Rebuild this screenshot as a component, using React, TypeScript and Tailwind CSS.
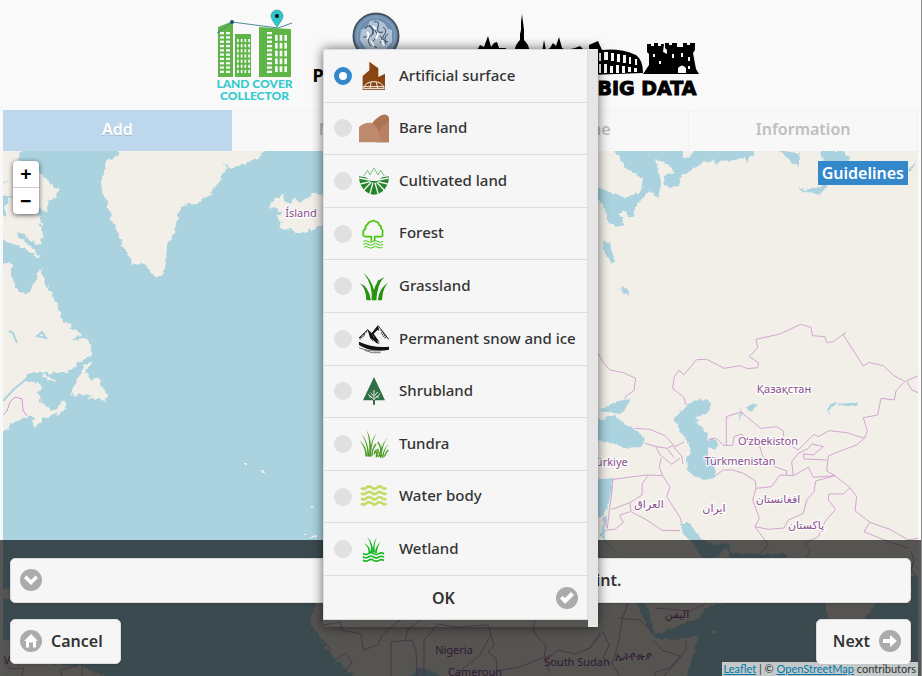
import React, { useState } from "react";

const ink = "font-['Noto_Sans','Open_Sans',sans-serif]";

/* ---------- Land cover icons ---------- */

function Svg({ children }: { children: React.ReactNode }) {
  return (
    <svg viewBox="0 0 90 90" className="size-[30px] shrink-0" aria-hidden="true" fill="none">
      {children}
    </svg>
  );
}

const ArtificialIcon = () => (
  <Svg>
    <path fill="#8b4513" d="M31 2 L58 22 V48 L78 38 V87 H11 V45 L31 28 Z" />
    <path d="M13 82 Q20 62 44 62 Q70 62 76 82" stroke="#f6f6f6" strokeWidth="3" />
    <path d="M13 77 H76 M36 64 L33 82 M52 64 L56 82 M13 83 H76" stroke="#f6f6f6" strokeWidth="3" />
  </Svg>
);

const BareIcon = () => (
  <Svg>
    <path fill="#ad7453" d="M38 32 Q62 3 80 5 Q90 7 90 18 V88 H50 Z" />
    <path fill="#b98062" d="M62 54 Q72 34 90 28 V88 H60 Z" />
    <path fill="#bd8a6e" d="M0 42 Q16 28 34 29 Q48 32 58 52 Q65 70 67 88 H0 Z" />
  </Svg>
);

const CultivatedIcon = () => (
  <Svg>
    <path d="M14 30 L26 13 L33 27 L45 6 L57 27 L65 13 L76 30" stroke="#4aa04a" strokeWidth="2" />
    <path fill="#25842b" d="M0 31 L20 34 L31 41 Q45 31 59 41 L70 34 L90 31 Q90 61 68 78 Q45 95 22 78 Q0 61 0 31 Z" />
    <path
      d="M32 42 L1 36 M33 47 L4 54 M37 49 L14 73 M42 50 L32 86 M48 50 L58 86 M53 49 L76 73 M57 47 L86 54 M58 42 L89 36"
      stroke="#f6f6f6"
      strokeWidth="4"
    />
    <path fill="#f6f6f6" d="M22 28 L33 34 Q40 28 45 31 Q50 28 57 34 L68 28 L56 45 H34 Z" />
  </Svg>
);

const ForestIcon = () => (
  <Svg>
    <g stroke="#43c80a" strokeWidth="5" strokeLinejoin="round">
      <path d="M37 67 V53 H20 Q9 51 13 42 Q11 34 20 29 Q17 20 25 17 Q28 8 38 7 Q42 2 48 7 Q59 8 60 17 Q68 20 66 29 Q74 34 70 44 Q74 53 63 53 H47 V67" />
      <path d="M13 67 Q20 62 27 68 Q35 73 42 67 Q50 62 57 68 Q65 73 72 67 M13 76 Q20 70 27 76 Q35 82 42 76 Q50 70 57 76 Q65 82 72 76 M15 85 Q22 79 28 85 Q36 90 42 85 Q50 79 57 85 Q64 89 70 85" strokeWidth="3" />
    </g>
  </Svg>
);

const GrassIcon = () => (
  <Svg>
    <path
      fill="#279410"
      d="M13 5 Q38 27 45 57 Q52 28 76 18 Q55 38 52 88 H38 Q42 40 13 5 Z M3 37 Q29 47 36 88 H22 Q22 55 3 37 Z M88 35 Q71 48 69 88 H56 Q61 48 88 35 Z M51 60 Q50 35 60 25 L62 29 Q56 42 56 57 Z"
    />
  </Svg>
);

const SnowIcon = () => (
  <Svg>
    <path d="M0 42 L26 17 L39 29 L57 5 L90 47" stroke="#222" strokeWidth="3" />
    <path fill="#111" d="M26 17 L39 30 L44 40 L62 60 L52 57 L39 44 L44 55 L33 41 Z M57 5 L61 22 L56 17 L44 29 L62 55 L50 48 L38 28 Z M0 53 Q40 72 90 68 V77 Q35 86 0 63 Z" />
    <path d="M3 41 L26 20 M2 46 L18 31 M66 18 L84 41 M66 26 L80 43" stroke="#222" strokeWidth="4" strokeDasharray="3 3" />
    <path d="M0 71 Q30 84 68 80 M17 79 Q40 90 65 86" stroke="#333" strokeWidth="2" />
  </Svg>
);

const ShrubIcon = () => (
  <Svg>
    <path fill="#2f6f43" d="M45 3 L78 73 H48 V86 H42 V73 H12 Z" />
    <path d="M45 42 V72 M44 69 L27 55 M46 69 L63 53 M44 60 L35 50 M46 60 L56 48 M39 63 H31 M51 63 H60" stroke="#dfe9e1" strokeWidth="3" />
  </Svg>
);

const TundraIcon = () => (
  <Svg>
    <g fill="#4c9b22">
      <path d="M2 35 Q22 48 25 84 L19 82 Q20 56 2 35 Z M7 14 Q29 37 31 84 L25 80 Q26 42 7 14 Z M23 4 Q39 28 36 83 H30 Q34 32 23 4 Z M54 12 Q40 28 36 74 L33 70 Q36 28 54 12 Z M70 32 Q71 58 62 85 L58 79 Q69 58 70 32 Z M90 45 Q76 59 73 86 H68 Q73 57 90 45 Z M86 27 Q72 43 69 71 L66 69 Q70 40 86 27 Z" />
    </g>
    <path d="M39 82 Q38 61 51 45 M45 76 Q48 64 58 60 M52 85 Q51 72 60 64 M56 39 Q67 51 67 82 M59 69 L66 86 M76 83 Q80 70 88 63 M48 63 L58 84" stroke="#4c9b22" strokeWidth="4" />
  </Svg>
);

const WaterIcon = () => (
  <Svg>
    <path
      d="M6 17 Q14 24 22 17 Q31 10 39 17 Q47 24 54 17 Q62 10 70 17 Q76 23 82 17 M6 33 Q14 40 22 33 Q31 26 39 33 Q47 40 54 33 Q62 26 70 33 Q76 39 82 33 M6 49 Q14 56 22 49 Q31 42 39 49 Q47 56 54 49 Q62 42 70 49 Q76 55 82 49 M6 64 Q14 71 22 64 Q31 57 39 64 Q47 71 54 64 Q62 57 70 64 Q76 70 82 64"
      stroke="#c5dc69"
      strokeWidth="8"
    />
  </Svg>
);

const WetlandIcon = () => (
  <Svg>
    <path fill="#19b822" d="M24 8 Q42 25 43 55 H36 Q38 28 24 8 Z M15 28 Q33 36 36 57 H29 Q29 39 15 28 Z M53 11 Q44 31 48 55 H42 Q41 26 53 11 Z M66 24 Q55 35 54 57 H47 Q50 34 66 24 Z" />
    <path
      d="M12 58 Q20 64 28 59 Q36 53 44 59 Q52 64 60 59 Q68 54 75 60 M12 68 Q20 74 28 69 Q36 63 44 69 Q52 74 60 69 Q68 64 75 70 M12 78 Q20 84 28 79 Q36 73 44 79 Q52 84 60 79 Q68 74 75 80"
      stroke="#19b822"
      strokeWidth="5"
    />
  </Svg>
);

const covers = [
  { name: "Artificial surface", Icon: ArtificialIcon },
  { name: "Bare land", Icon: BareIcon },
  { name: "Cultivated land", Icon: CultivatedIcon },
  { name: "Forest", Icon: ForestIcon },
  { name: "Grassland", Icon: GrassIcon },
  { name: "Permanent snow and ice", Icon: SnowIcon },
  { name: "Shrubland", Icon: ShrubIcon },
  { name: "Tundra", Icon: TundraIcon },
  { name: "Water body", Icon: WaterIcon },
  { name: "Wetland", Icon: WetlandIcon },
];

/* ---------- Round button icons ---------- */

function Disc({ d }: { d: string }) {
  return (
    <svg viewBox="0 0 22 22" className="size-[22px] shrink-0" aria-hidden="true">
      <circle cx="11" cy="11" r="11" fill="#ababab" />
      <path d={d} fill="#fff" />
    </svg>
  );
}

const CHEVRON = "M4 9 L6.500 6.500 L11 11 L15.500 6.500 L18 9 L11 16 Z";
const HOUSE = "M11 4 L18 11 H16 V17.500 H13 V12.500 H9 V17.500 H6 V11 H4 Z";
const ARROW = "M4 9 H11 V5 L18 11 L11 17 V13 H4 Z";
const CHECK = "M4 11.500 L6.500 9 L9 11 L15 5 L18 8 L9 17 Z";

/* ---------- Header logos ---------- */

function Tower({ x, y, w, h, cols, rows }: { x: number; y: number; w: number; h: number; cols: number; rows: number }) {
  const cells = [];
  for (let r = 0; r < rows; r++)
    for (let c = 0; c < cols; c++)
      cells.push(
        <rect key={r + "-" + c} x={x + (c * w) / cols + 1} y={y + (r * h) / rows} width={w / cols - 2} height={h / rows - 2} />
      );
  return <g fill="#f9f9f9">{cells}</g>;
}

function LandCoverLogo() {
  return (
    <div className="flex w-[76px] flex-col items-center pt-2">
      <svg viewBox="216 8 78 70" className="h-[70px] w-[78px]" role="img" aria-label="Land Cover Collector logo">
        <path fill="#5fb548" d="M218 27 L233 21 V77 H218 Z M235 34 H251 V77 H235 Z M259 27 L273 28 L291 29 V77 H259 Z" />
        <Tower x={219} y={32} w={12} h={43} cols={2} rows={10} />
        <Tower x={236} y={39} w={15} h={36} cols={4} rows={7} />
        <Tower x={266} y={32} w={7} h={43} cols={1} rows={10} />
        <Tower x={274} y={35} w={14} h={39} cols={3} rows={5} />
        <path d="M217 33 L232 22 L278 28 L292 23" stroke="#4b8a94" fill="none" />
        <circle cx="232" cy="22" r="2" fill="#19566b" />
        <path d="M277 27 Q271 19 271 16 A6 6 0 0 1 283 16 Q283 19 277 27 Z" fill="#2fc6cb" stroke="#2b8f98" strokeWidth=".6" />
        <circle cx="277" cy="16" r="2" fill="#111" />
      </svg>
      <div className="text-center font-['Lato',sans-serif] text-[12px] leading-[12px] font-black whitespace-nowrap text-[#35cbce]">
        LAND COVER
        <br />
        COLLECTOR
      </div>
    </div>
  );
}

function UniversityLogo() {
  return (
    <div className="flex w-[126px] flex-col items-center pt-[12px]">
      <svg viewBox="0 0 48 48" className="size-12" role="img" aria-label="University seal">
        <circle cx="24" cy="24" r="22.500" fill="#6e90b0" stroke="#46525e" strokeWidth="2" />
        <circle cx="24" cy="24" r="19" fill="none" stroke="#8ba7bf" />
        <path d="M9 18 L15 15 L18 9 L25 8 L32 11 L36 17 L40 18 V30 L34 37 H14 L8 28 Z" fill="#b2c4d5" />
        <path
          d="M13 17 q4 -6 7 0 t-2 7 q-4 4 1 10 M22 10 q6 -2 4 5 t5 5 M23 18 q4 6 -1 10 t3 8 M31 15 q5 3 1 8 t4 7 M11 25 h7 M28 24 q4 2 0 7 M17 13 q7 4 3 9 M36 22 q-5 3 -2 10"
          fill="none"
          stroke="#34495c"
        />
        <path d="M15 20 q3 3 0 7 M21 14 l3 3 M26 21 l-2 6 M30 28 l2 6 M19 29 l3 5" stroke="#fff" strokeWidth="2" fill="none" />
      </svg>
      <div className="mt-1 self-start text-[18px] leading-[22px] font-bold text-black">POLITECNICO</div>
    </div>
  );
}

function BigDataLogo() {
  return (
    <div className="ml-[18px] flex flex-col items-end pt-[13px]">
      <svg viewBox="477 13 224 63" className="h-[63px] w-[224px]" role="img" aria-label="City skyline">
        <path d="M477 50 L480 45 L484 47 L488 36 L491 47 L494 43 L497 42 L499 48 L506 48 V75 H477 Z" />
        <path d="M514 52 Q516 43 520 40 V34 L521 30 V22 L522 14 L523 22 L524 30 V40 Q528 43 530 52 Z M542 52 L544 40 L546 50 L550 48 L553 43 L556 46 L559 37 L562 48 L566 50 L575 48 L580 46 L584 50 V75 H542 Z" />
        <path d="M589 45 L598 41 L602 50 Q620 48 636 55 Q643 60 643 73 L590 75 Z M643 74 L649 65 V54 L647 52 V44 H651 V46 H654 V43 H658 V46 H661 V44 H664 L663 52 L667 54 V50 L665 48 V43 H669 V45 H672 V43 H677 V47 H683 V43 H687 V45 H690 V43 H695 V50 L693 53 L696 69 L699 74 Z" />
        <g fill="#f9f9f9">
          <path d="M599 53 h2 v8 h-2 Z M604 52 h4 v8 h-4 Z M611 53 h3 v8 h-3 Z M617 54 h3 v8 h-3 Z M623 55 h3 v8 h-3 Z M629 57 h2 v7 h-2 Z M635 59 h2 v6 h-2 Z M599 64 h2 v9 h-2 Z M604 64 h3 v9 h-3 Z M610 66 h3 v7 h-3 Z M616 65 h3 v8 h-3 Z M622 66 h3 v7 h-3 Z M628 67 h3 v5 h-3 Z M634 68 h3 v4 h-3 Z" />
          <path d="M678 73 V68 Q682 63 686 68 V73 Z M653 54 h2 v3 h-2 Z M659 61 h2 v3 h-2 Z M672 54 h2 v4 h-2 Z M681 53 h2 v4 h-2 Z M688 57 h2 v4 h-2 Z M688 66 h2 v3 h-2 Z" />
        </g>
      </svg>
      <div className="mr-1 font-['DejaVu_Sans',sans-serif] text-[19px] leading-[24px] font-bold text-black [-webkit-text-stroke:1px_#000]">GEO BIG DATA</div>
    </div>
  );
}

/* ---------- Map ---------- */

const label = "fill-[#8b4d91] stroke-white/80 text-[11px] font-['Noto_Sans','DejaVu_Sans',sans-serif] [paint-order:stroke]";

function WorldMap() {
  return (
    <svg viewBox="3 151 915 525" preserveAspectRatio="xMidYMid slice" className="absolute inset-0 size-full" role="img" aria-label="World map">
      <defs>
        <filter id="coast" x="0" y="0" width="1" height="1">
          <feTurbulence type="fractalNoise" baseFrequency=".18" numOctaves="2" seed="4" />
          <feDisplacementMap in="SourceGraphic" scale="7" xChannelSelector="R" yChannelSelector="G" />
        </filter>
        <filter id="shore" x="0" y="0" width="1" height="1">
          <feTurbulence type="fractalNoise" baseFrequency=".2" numOctaves="2" seed="9" />
          <feDisplacementMap in="SourceGraphic" scale="4" xChannelSelector="R" yChannelSelector="G" />
        </filter>
      </defs>
      <rect x="3" y="151" width="915" height="525" fill="#aad3df" />
      <g fill="#f2efe9" filter="url(#coast)">
        <path d="M117 145 L117 155 L106 163 L102 180 L103 193 L108 205 L112 220 L118 232 L122 244 L128 256 L134 265 L142 263 L150 270 L157 277 L162 274 L165 262 L168 245 L175 230 L178 215 L182 206 L196 204 L210 195 L218 183 L222 174 L228 168 L222 161 L230 168 L245 164 L258 158 L268 150 V145 Z" />
        <path d="M269 206 L275 198 L283 194 L286 202 L291 204 L293 198 L298 202 L308 197 L315 193 L323 195 L345 207 L323 224 L312 230 L301 234 L288 229 L279 228 L283 222 L276 215 L283 213 L277 210 Z" />
        <path d="M-5 145 H30 L17 157 L24 163 L40 172 L48 182 L59 190 L55 198 L48 201 L46 212 L37 209 L40 222 L43 234 L41 246 L34 242 L25 237 L17 231 L20 238 L33 248 L40 258 L30 252 L18 246 L8 242 L-5 236 V213 L7 217 L4 207 L12 196 L-5 195 V184 L8 182 L-5 178 Z" />
        <path d="M-5 262 L12 264 V280 L18 290 L25 294 L33 287 L37 276 L40 268 L45 283 L52 295 L58 308 L61 318 L72 328 L82 333 L70 342 L82 337 L90 343 L91 355 L80 362 L67 372 L48 373 L30 373 L24 381 L38 382 L43 388 L38 393 L41 402 L45 405 L52 410 L56 409 L60 402 L64 400 L67 408 L58 414 L42 419 L35 428 L32 422 L35 417 L27 417 L15 422 L7 428 L-5 440 Z" />
        <path d="M71 394 L78 380 L85 363 L92 361 L86 374 L90 378 L99 379 L103 388 L108 396 L105 402 L100 398 L88 400 L92 394 L83 395 Z M41 375 L50 377 L57 382 L48 381 Z" />
        <path d="M244 464 h4 v2 h-4 Z M261 471 h4 v1 h-4 Z M310 506 h3 v1 h-3 Z M305 534 h2 v2 h-2 Z M311 536 h4 v2 h-4 Z" />
        <path d="M-5 588 L8 590 L12 598 L-5 598 Z M-5 638 L12 642 L30 650 L55 665 L80 666 L110 678 L-5 680 Z" />
        <path d="M330 590 L315 605 L310 621 L320 637 L333 658 L358 680 H408 L416 670 L426 668 L437 674 L442 682 H620 V500 H400 Z" />
      </g>
      <path d="M3 401 L14 389 L24 381 L31 374" stroke="#aad3df" strokeWidth="2" fill="none" />
      <path d="M9 331 l4 2 l4 10 M37 336 l5 -4 l4 6 Z M20 270 l2 -2" stroke="#aad3df" strokeWidth="2" fill="none" />

      {/* Eurasia and east Africa, with the seas cut out of them */}
      <path fill="#f2efe9" d="M590 151 H918 V676 H590 Z" />
      <g fill="#aad3df" filter="url(#shore)">
        <path d="M611 145 L625 167 L643 180 L642 188 L638 193 L625 198 L612 193 L590 184 V192 L604 205 L607 221 L618 228 L624 225 L622 217 L617 213 L626 210 L627 216 L634 217 L635 208 L645 196 L650 190 L658 199 L661 183 L660 177 L658 168 L655 160 L664 162 L670 166 L674 172 L664 176 L664 185 L670 187 L679 186 L681 176 L695 168 L705 162 L714 160 L716 166 L720 161 L735 160 L745 157 L747 164 L749 157 L754 156 L753 145 H694 V151 L690 157 L683 158 V145 Z" />
        <path d="M779 151 L799 153 L800 160 L798 167 L790 160 Z M820 151 H842 L850 158 L848 164 L825 166 Z M799 186 L804 190 L815 188 L829 183 L820 195 L812 193 L802 191 Z M908 170 L918 160 L910 172 Z" />
        <path d="M603 240 L610 243 L612 253 L615 258 L612 264 L607 255 L603 250 Z M619 288 L623 290 L622 285 L629 291 L629 295 L624 294 Z" />
        <path d="M605 407 L618 401 L631 399 L625 410 L620 414 L606 412 L598 409 L606 408 Z M590 416 L604 420 L607 417 L615 415 L624 424 L634 429 L642 434 L645 440 L640 447 L625 448 L612 443 L590 438 Z" />
        <path d="M673 420 L684 409 L690 403 L699 399 L710 401 L712 407 L704 415 L694 417 L701 421 L696 422 L707 433 L708 441 L713 438 L719 445 L716 450 L708 448 L708 458 L715 462 L715 478 L704 480 L695 477 L687 470 L686 457 L692 453 L687 441 L680 431 L677 424 Z" />
        <path d="M740 409 L742 411 L741 420 L739 421 Z M746 409 L753 403 L757 406 L750 411 Z M827 408 L834 402 L840 404 L850 403 L859 402 L857 406 L846 406 L836 404 L829 410 L830 416 Z" />
        <path d="M590 480 L613 478 L612 490 L608 505 L605 513 L600 517 L590 518 Z M604 517 L607 516 L604 538 L620 558 L635 590 L637 603 L648 628 L655 638 L675 640 L698 636 L695 650 L690 665 L685 680 H925 V577 L911 575 V603 H877 L868 614 L863 620 L855 640 L840 640 L829 622 L825 603 V580 L787 570 L730 565 L724 603 L705 608 L700 618 L680 625 L660 633 L655 634 L651 622 L649 610 L630 580 L620 558 L600 536 Z" />
        <path d="M680 524 L688 522 L693 528 L703 540 L715 545 L729 543 L730 551 L733 553 L760 554 L787 554 V570 H732 L729 553 L725 548 L718 557 L704 558 L698 552 L695 545 L684 535 Z" />
      </g>
      <path fill="#f2efe9" d="M711 631 h5 v2 h-5 Z" />

      <g transform="translate(580 320) scale(.33333)" stroke="#d3a5d0" fill="none">
        <g strokeWidth="3">
          <path d="M54 100 L70 128 L90 150 L130 158 L167 175 L162 212 L138 228 L135 238 M165 325 L210 328 L255 347 L285 380 L312 366 M195 370 L230 380 L262 385 L277 377 L305 408 L309 432 M228 380 L240 405 L275 433 L300 415 M262 388 L282 412 M243 415 L238 440 L248 467 L200 465 L130 474 L99 478 M205 465 L187 490 L186 525 L150 548 L95 568 M248 467 L270 500 L260 530 L300 592 L305 610 M150 548 L153 575 L200 600 L247 631 L300 632 M150 575 L118 586 L130 607 L105 628 L80 630 M99 478 L94 530 L88 570 L82 625 L75 605 L70 590" />
          <path d="M318 255 L312 232 L278 206 L283 170 L297 151 L312 164 L350 119 L380 118 L432 145 L480 137 L502 146 L533 143 L536 129 L508 110 L533 83 L528 58 L600 42 L662 13 L693 22 L697 47 L735 50 L740 68 L760 65 L796 38 L790 45 L850 138 L868 127 L910 137 L943 168 L975 184 L948 213 L943 240 L903 235 L893 285 L850 293 L862 333 L853 355 L800 338 L747 332 L715 350 L702 343 L655 390 L612 363 L610 333 L590 320 L542 325 L483 276 L439 290 V376 H458 L462 350 L485 342 L500 362 L538 375 L548 410 L580 438 L620 453 V465 M1014 168 L980 182 L995 210 L1014 218" />
          <path d="M383 362 Q398 350 412 358 L430 376 H439 M405 468 L430 450 H460 L490 460 L526 483 L528 505 L575 500 L600 465 L640 467 L685 442 L700 472 L765 467 L740 453 L745 408 L775 395 L830 375 L853 355 M640 467 L635 425 L655 400 L685 385 L695 372 L730 380 L700 405 L670 402 L672 417 L740 420 M528 505 L518 540 L538 595 L525 620 L565 628 L612 624 L625 600 L670 580 L680 540 L702 515 L707 483 L765 467 L810 503 L830 530 L825 572 L870 607 L852 635 L900 655 L985 685 M870 607 L930 628 L985 660 L1014 655 M810 503 L790 522 L747 522 L745 540 L767 568 L735 605 L715 650 L672 670 L690 690 L680 710 M525 620 L565 675 L540 700" />
        </g>
      </g>
      <g stroke="#cf9bcb" fill="none">
        <path d="M3 415 L7 411 L10 402 L15 397 L22 399 L23 410 L27 416 M3 661 L10 669 L24 668 L22 676 M78 665 L60 670 L62 676 M82 667 V676 M101 671 V676" />
        <path d="M323 625 L340 622 L342 630 L361 634 L363 650 L378 645 L382 635 L400 620 M391 642 V676 M391 642 L412 640 L416 650 L417 676 M424 676 V640 L431 632 L438 624 L455 627 L488 625 L491 634 L480 655 L465 667 L455 676 M491 634 L494 645 L488 652 L496 658 L497 672 L490 676 M497 671 L520 667 L542 658 L553 655 M535 620 L533 630 L540 640 L546 645 L544 658 L550 673 M546 660 L558 650 L575 654 L590 648 L603 632 L609 645 L603 658 L612 664 L620 676 M612 664 L618 645 L622 620 L628 603 M618 618 L640 620 L653 632 M653 640 L662 650 L680 656 L670 668 L655 672 L655 676 M686 640 V650 L680 658 L664 676 M655 608 L690 611 L705 604 M335 660 L345 653 L352 662 L345 672 M600 632 L590 648 M323 640 L331 650 M405 641 L408 630 L420 620" />
        <path d="M911 551 L914 560 L911 570 L916 576" />
      </g>
      <g className={label} strokeWidth="2.500" textAnchor="middle">
        <text x="301" y="217">Ísland</text>
        <text x="784" y="393">Қазақстан</text>
        <text x="768" y="445">Oʻzbekiston</text>
        <text x="740" y="465">Türkmenistan</text>
        <text x="609" y="466">Türkiye</text>
        <text x="649" y="508">العراق</text>
        <text x="714" y="512">ایران</text>
        <text x="778" y="503">افغانستان</text>
        <text x="806" y="529">پاکستان</text>
      </g>
      <g className="fill-[#8b4d91] font-['Noto_Sans','DejaVu_Sans',sans-serif] text-[11px]" textAnchor="middle">
        <text x="677" y="618">اليمن</text>
        <text x="633" y="660">ኢትዮጵያ</text>
        <text x="454" y="654">Nigeria</text>
        <text x="475" y="676">Cameroun</text>
        <text x="577" y="666">South Sudan</text>
        <text x="7" y="664">V</text>
      </g>
    </svg>
  );
}

/* ---------- Page ---------- */

const panelButton =
  "flex h-[45px] items-center rounded-[5px] border border-[#ddd] bg-[#f6f6f6] pb-[2px] text-[16px] font-semibold text-[#333] shadow-[0_1px_3px_rgba(0,0,0,0.15)]";

export default function App() {
  const [cover, setCover] = useState("Artificial surface");
  const tabs = ["Add", "Modify", "All in one", "Information"];

  return (
    <div className={"relative flex min-h-screen flex-col overflow-hidden border-r border-[#8c8c8c] bg-[#f9f9f9] " + ink}>
      <header className="flex h-[110px] items-start justify-center gap-5 pr-1">
        <LandCoverLogo />
        <UniversityLogo />
        <BigDataLogo />
      </header>

      <nav className="mx-[3px] grid h-[41px] grid-cols-4">
        {tabs.map((tab, i) => (
          <button
            key={tab}
            type="button"
            className={
              i === 0
                ? "bg-[#bdd8ed] pb-1 text-[16px] font-semibold text-white [text-shadow:0_1px_0_#9fb9d0]"
                : "border-t border-r border-[#f1f1f1] bg-[#f8f8f8] pb-1 text-[16px] font-semibold text-[#bfbfbf]"
            }
          >
            {tab}
          </button>
        ))}
      </nav>

      <main className="relative mx-[3px] flex-1">
        <WorldMap />
        <div className="absolute top-[10px] left-[10px] flex w-[26px] flex-col overflow-hidden rounded-[4px] bg-white font-['DejaVu_Sans_Mono',monospace] text-[18px] leading-[26px] font-bold text-black shadow-[0_1px_5px_rgba(0,0,0,0.65)]">
          <button type="button" aria-label="Zoom in" className="h-[27px] border-b border-[#ccc]">
            +
          </button>
          <button type="button" aria-label="Zoom out" className="h-[26px]">
            −
          </button>
        </div>
        <button type="button" className="absolute top-[10px] right-[10px] h-6 bg-[#3388cc] px-[4px] text-[16px] leading-[22px] font-semibold text-white">
          Guidelines
        </button>
      </main>

      <section className="absolute inset-x-0 bottom-0 flex flex-col gap-4 bg-black/65 pt-[18px] pr-[10px] pb-3 pl-[10px]">
        <button type="button" className={panelButton + " relative w-full justify-center pr-4 pl-10"}>
          <span className="absolute left-[9px]">
            <Disc d={CHEVRON} />
          </span>
          Choose the land cover class of a point.
        </button>
        <div className="flex justify-between">
          <button type="button" className={panelButton + " gap-[9px] pr-[17px] pl-[9px]"}>
            <Disc d={HOUSE} />
            Cancel
          </button>
          <button type="button" className={panelButton + " gap-[9px] pr-[9px] pl-4"}>
            Next
            <Disc d={ARROW} />
          </button>
        </div>
      </section>

      <footer className="absolute right-[3px] bottom-0 bg-white/70 px-[2px] font-['Lato',Arial,sans-serif] text-[11px] leading-[14px] text-[#333]">
        <a href="#leaflet" className="text-[#0078a8] underline">
          Leaflet
        </a>{" "}
        | ©{" "}
        <a href="#osm" className="text-[#0078a8] underline">
          OpenStreetMap
        </a>{" "}
        contributors
      </footer>

      {/* Land cover chooser, floating above the page */}
      <form
        className="absolute inset-x-0 top-[49px] mx-auto flex w-[275px] rounded-[3px] shadow-[0_0_12px_rgba(0,0,0,0.6)]"
        onSubmit={(e) => e.preventDefault()}
      >
        <div className="mb-[7px] flex-1 rounded-tl-[3px] border border-[#ddd] bg-[#f6f6f6]">
          <div className="grid h-[526px] grid-rows-10">
            {covers.map(({ name, Icon }) => (
              <label key={name} className="flex items-center border-b border-[#ddd] pl-[10px] text-[15px] font-medium text-[#333]">
                <input
                  type="radio"
                  name="cover"
                  checked={cover === name}
                  onChange={() => setCover(name)}
                  className="size-[18px] shrink-0 appearance-none rounded-full bg-[#e0e0e0] checked:border-[5px] checked:border-[#3388cc] checked:bg-white"
                />
                <span className="mr-[10px] ml-[7px]">
                  <Icon />
                </span>
                <span className="pb-[2px]">{name}</span>
              </label>
            ))}
          </div>
          <button type="submit" className="relative flex h-[43px] w-full items-center justify-center pr-6 text-[16px] font-semibold text-[#333]">
            OK
            <span className="absolute right-[9px]">
              <Disc d={CHECK} />
            </span>
          </button>
        </div>
        <div className="w-[10px] bg-[#e5e5e5]" />
      </form>
    </div>
  );
}
